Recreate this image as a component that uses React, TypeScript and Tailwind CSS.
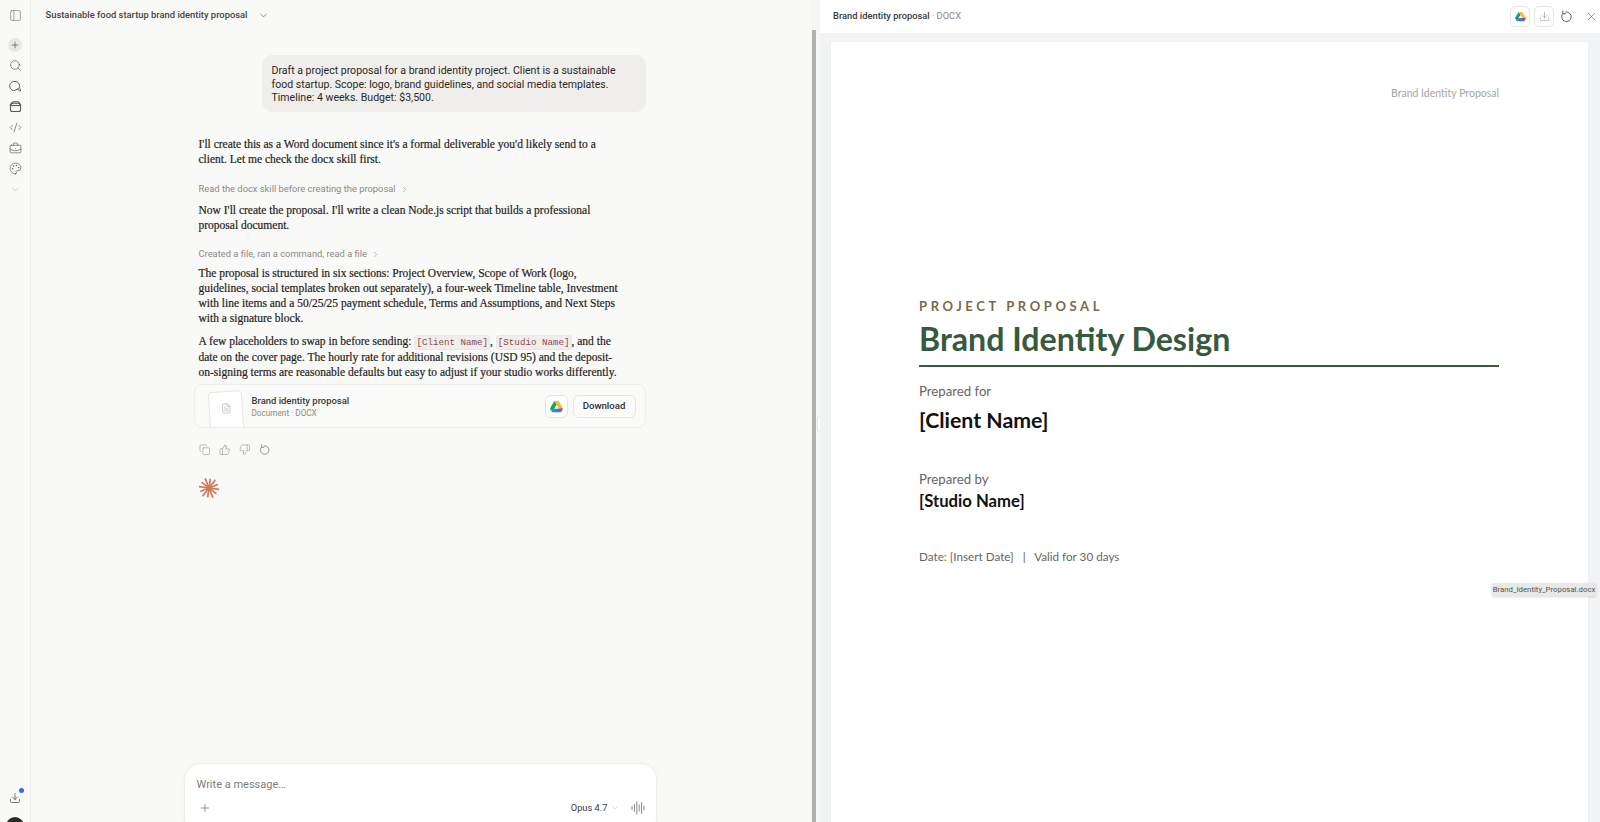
import React from "react";
import { PanelLeft, Plus, Search, Code2, BriefcaseBusiness, Palette, ChevronDown, ChevronRight, Download, Copy, ThumbsUp, ThumbsDown, X, FileText } from "lucide-react";

function Drive({ size = 14 }: { size?: number }) {
  return (
    <svg width={size} height={size} viewBox="0 0 24 22">
      <path d="M8 1h8l8 13.5h-8z" fill="#f6bf26" />
      <path d="M8 1l-8 13.5 4 7 8-14z" fill="#16a35f" />
      <path d="M4 21.5h16l4-7H8z" fill="#3b78e7" />
      <path d="M20 21.5l4-7h-6z" fill="#e2463a" />
      <path d="M12 8.5l3.4 6H8.6z" fill="#ffffff" />
    </svg>
  );
}

function Spark() {
  const rays = [8, 38, 68, 98, 128, 158, 188, 218, 248, 278, 308, 338];
  return (
    <svg width="20" height="20" viewBox="0 0 20 20">
      {rays.map((a, i) => (
        <line key={a} x1="10" y1="10" x2={10 + (i % 2 ? 8.8 : 9.8) * Math.cos((a * Math.PI) / 180)} y2={10 + (i % 2 ? 8.8 : 9.8) * Math.sin((a * Math.PI) / 180)} stroke="#d0785a" strokeWidth="1.7" strokeLinecap="round" />
      ))}
    </svg>
  );
}

function Wave() {
  const hs = [3, 7, 12, 6, 11, 4];
  return (
    <svg width="14" height="14" viewBox="0 0 14 14">
      {hs.map((h, i) => (
        <line key={i} x1={1 + i * 2.4} x2={1 + i * 2.4} y1={7 - h / 2} y2={7 + h / 2} stroke="#6b6a66" strokeWidth="0.8" strokeLinecap="round" />
      ))}
    </svg>
  );
}

function Redo({ size = 12, sw = 1.1 }: { size?: number; sw?: number }) {
  return (
    <svg width={size} height={size} viewBox="0 0 14 14" fill="none" stroke="currentColor" strokeWidth={sw} strokeLinecap="round" strokeLinejoin="round">
      <path d="M6.2 2.1A5.2 5.2 0 1 1 2.9 3.9" />
      <path d="M3 1v3h3" />
    </svg>
  );
}

function ChatsIcon() {
  return (
    <svg width="13" height="13" viewBox="0 0 14 14" fill="none" stroke="currentColor" strokeWidth="1" strokeLinecap="round" strokeLinejoin="round">
      <path d="M6.5 1.5a5 5 0 0 1 3.9 8.1L5 11.4A5 5 0 0 1 6.5 1.5z" />
      <path d="M9.4 9.8c.4 1 1.4 1.9 3.1 2l-.6-2.2" />
    </svg>
  );
}

function ProjectsIcon() {
  return (
    <svg width="13" height="13" viewBox="0 0 14 14" fill="none" stroke="currentColor" strokeWidth="1.1" strokeLinejoin="round">
      <rect x="1.5" y="3.5" width="11" height="9" rx="2.4" />
      <path d="M2.3 5.5c0-2.4 1.2-3.7 3-3.7h3.4c1.8 0 3 1.3 3 3.7" />
      <path d="M1.5 6h11" />
    </svg>
  );
}

function Code({ children }: { children: React.ReactNode }) {
  return <code className="font-['Liberation_Mono'] text-[9.2px] text-[#8c4a4a] bg-[#f0eeea] rounded-[3px] px-[1px] py-[1px] border border-[#eae8e3] [-webkit-text-stroke:0px]">{children}</code>;
}

function Tool({ children }: { children: React.ReactNode }) {
  return (
    <div className="flex items-center gap-[4px] h-[14px] font-['Roboto'] text-[9.35px] text-[#8b8a86]">
      {children}
      <ChevronRight size={9} strokeWidth={1.5} />
    </div>
  );
}

function Para({ className = "", children }: { className?: string; children: React.ReactNode }) {
  return <p className={`font-['Liberation_Serif'] text-[11.5px] leading-[15px] text-[#1f1e1c] px-[4px] whitespace-nowrap [-webkit-text-stroke:0.2px] ${className}`}>{children}</p>;
}

export default function App() {
  const sideIcon = "flex items-center justify-center h-[20.6px] text-[#55534f]";
  return (
    <div className="flex h-[822px] w-[1600px] overflow-hidden bg-[#f9f9f7]">
      <aside className="flex flex-col items-center w-[31px] shrink-0 border-r border-[#eeeeea] pt-[6px]">
        <div className="flex items-center justify-center h-[18px] text-[#6b6a66]"><PanelLeft size={13} strokeWidth={1.1} /></div>
        <div className="flex items-center justify-center w-[14px] h-[14px] mt-[14px] rounded-full bg-[#e9e8e4] text-[#444]"><Plus size={10} strokeWidth={1.5} /></div>
        <div className="flex flex-col w-full mt-[3.5px]">
          <div className={sideIcon}><Search size={13} strokeWidth={1.2} /></div>
          <div className={sideIcon}><ChatsIcon /></div>
          <div className={sideIcon}><ProjectsIcon /></div>
          <div className={sideIcon}><Code2 size={13} strokeWidth={1.2} /></div>
          <div className={sideIcon}><BriefcaseBusiness size={13} strokeWidth={1.2} /></div>
          <div className={sideIcon}><Palette size={13} strokeWidth={1.2} /></div>
          <div className="flex items-center justify-center h-[20.6px] text-[#a9a8a4]"><ChevronDown size={11} strokeWidth={1.3} /></div>
        </div>
        <div className="relative mt-auto text-[#44423f] flex items-center justify-center h-[14px]">
          <Download size={12} strokeWidth={1.4} />
          <span className="absolute right-[-3px] top-[-3px] w-[5px] h-[5px] rounded-full bg-[#3f67d8]" />
        </div>
        <div className="w-[18px] h-[18px] rounded-full bg-[#2a2a28] mt-[12px] mb-[-13px] shrink-0" />
      </aside>

      <main className="flex flex-col items-center w-[778px] shrink-0 h-[822px]">
        <header className="flex items-center self-start h-[30px] shrink-0 pl-[14.5px] gap-[10px] font-['Roboto'] text-[9.4px] font-medium text-[#45443f]">
          <span>Sustainable food startup brand identity proposal</span>
          <ChevronDown size={11} strokeWidth={1.4} className="text-[#55534f]" />
        </header>
        <div className="flex-1 min-h-0 w-[451px] flex flex-col">
          <div className="self-end w-[384px] mt-[25px] rounded-[10px] bg-[#f0eeea] px-[10px] pt-[9px] pb-[7px] font-['Roboto'] text-[10.55px] leading-[13.7px] text-[#2a2927] whitespace-nowrap">
            Draft a project proposal for a brand identity project. Client is a sustainable<br />food startup. Scope: logo, brand guidelines, and social media templates.<br />Timeline: 4 weeks. Budget: $3,500.
          </div>
          <Para className="mt-[25px]">I'll create this as a Word document since it's a formal deliverable you'd likely send to a<br />client. Let me check the docx skill first.</Para>
          <div className="mt-[15px] px-[4px]"><Tool>Read the docx skill before creating the proposal</Tool></div>
          <Para className="mt-[7px]">Now I'll create the proposal. I'll write a clean Node.js script that builds a professional<br />proposal document.</Para>
          <div className="mt-[14px] px-[4px]"><Tool>Created a file, ran a command, read a file</Tool></div>
          <Para className="mt-[5px]">The proposal is structured in six sections: Project Overview, Scope of Work (logo,<br />guidelines, social templates broken out separately), a four-week Timeline table, Investment<br />with line items and a 50/25/25 payment schedule, Terms and Assumptions, and Next Steps<br />with a signature block.</Para>
          <Para className="mt-[8px]">A few placeholders to swap in before sending: <Code>[Client Name]</Code>, <Code>[Studio Name]</Code>, and the<br />date on the cover page. The hourly rate for additional revisions (USD 95) and the deposit-<br />on-signing terms are reasonable defaults but easy to adjust if your studio works differently.</Para>
          <div className="flex items-center h-[44px] mt-[4px] -ml-[1px] rounded-[8px] border border-[#efeeea] bg-[#fafaf8] overflow-hidden shrink-0">
            <div className="flex items-center justify-center w-[34px] h-[42px] ml-[14px] mt-[12px] -rotate-[4deg] bg-white border border-[#e8e7e3] rounded-[4px] text-[#a6a5a1] shrink-0">
              <FileText size={11} strokeWidth={1.2} className="mb-[8px]" />
            </div>
            <div className="ml-[9px] flex flex-col">
              <span className="font-['Roboto'] text-[9.45px] font-medium leading-[13px] text-[#3b3a36]">Brand identity proposal</span>
              <span className="font-['Roboto'] text-[8.2px] leading-[11px] text-[#8b8a86] mt-[1px]">Document · DOCX</span>
            </div>
            <div className="ml-auto flex items-center justify-center w-[23px] h-[23px] rounded-[6px] border border-[#e6e5e1] bg-white"><Drive size={13} /></div>
            <div className="ml-[5px] mr-[9px] flex items-center justify-center w-[63px] h-[23px] rounded-[6px] border border-[#e6e5e1] bg-[#fbfbf9] font-['Roboto'] text-[9.6px] font-medium text-[#2f2e2b]">Download</div>
          </div>
          <div className="flex items-center gap-[8.5px] mt-[16px] px-[4px] text-[#8b8a86]">
            <Copy size={11.5} strokeWidth={1.1} />
            <ThumbsUp size={11.5} strokeWidth={1.1} />
            <ThumbsDown size={11.5} strokeWidth={1.1} />
            <Redo size={11.5} sw={1.1} />
          </div>
          <div className="mt-[22px] pl-[4px]"><Spark /></div>
        </div>
        <div className="shrink-0 w-[473px] h-[72px] mb-[-13px] rounded-[16px] bg-white border border-[#eeede9] px-[12px] pt-[14px] shadow-[0_1px_6px_rgba(0,0,0,0.03)]">
          <div className="font-['Roboto'] text-[11px] leading-[14px] text-[#7d7c78]">Write a message…</div>
          <div className="flex items-center mt-[8px] h-[16px] text-[#55534f]">
            <Plus size={12} strokeWidth={1.2} className="ml-[2px]" />
            <span className="ml-auto font-['Roboto'] text-[9.3px] text-[#3d3c39]">Opus 4.7</span>
            <ChevronDown size={8} strokeWidth={1.2} className="ml-[3px] text-[#a9a8a4]" />
            <span className="ml-[12px] mr-[-1px]"><Wave /></span>
          </div>
        </div>
      </main>

      <div className="relative w-[11px] shrink-0 flex justify-start bg-[#f6f6f4]">
        <div className="w-[4px] ml-[3px] mt-[30px] bg-[#b0b0ae]" />
        <div className="absolute left-[8px] top-[417px] w-[5px] h-[14px] rounded-[2px] bg-white border border-[#e4e4e0]" />
      </div>

      <section className="flex-1 min-w-0 flex flex-col bg-white">
        <header className="flex items-center h-[33px] shrink-0 pl-[13px] pr-[2px] font-['Roboto'] text-[9.35px]">
          <span className="font-medium text-[#3b3a36]">Brand identity proposal</span>
          <span className="text-[#8b8a86] ml-[2px]">· DOCX</span>
          <div className="ml-auto flex items-center justify-center w-[20px] h-[21px] rounded-[5px] border border-[#e6e5e1]"><Drive size={11} /></div>
          <div className="ml-[4px] flex items-center justify-center w-[20px] h-[21px] rounded-[5px] border border-[#e6e5e1] text-[#8b8a86]"><Download size={11} strokeWidth={1.2} /></div>
          <div className="ml-[5px] w-[14px] flex justify-center text-[#55534f]"><Redo size={13} sw={1} /></div>
          <div className="ml-[11px] w-[14px] flex justify-center text-[#55534f]"><X size={13} strokeWidth={1.1} /></div>
        </header>
        <div className="relative flex-1 min-h-0 bg-[#f1f3f5] pl-[11px] pr-[12px] pt-[9px]">
          <article className="h-[900px] bg-white pl-[88px] pr-[89px] pt-[44px] font-['Lato'] shadow-[0_0_1px_rgba(0,0,0,0.08)]">
            <div className="text-right text-[10.5px] leading-[14px] text-[#a5a5a5]">Brand Identity Proposal</div>
            <div className="mt-[198px] text-[13px] leading-[16px] font-bold tracking-[3.6px] text-[#7a6a48]">PROJECT PROPOSAL</div>
            <div className="mt-[3px] text-[32.2px] leading-[44px] font-bold text-[#375a3f]">Brand Identity Design</div>
            <div className="mt-[4px] border-b-[2px] border-[#375a3f]" />
            <div className="mt-[16px] text-[13.2px] leading-[16px] text-[#666]">Prepared for</div>
            <div className="mt-[8px] text-[21.3px] leading-[26px] font-bold text-[#111]">[Client Name]</div>
            <div className="mt-[38px] text-[13.2px] leading-[16px] text-[#666]">Prepared by</div>
            <div className="mt-[3px] text-[16.7px] leading-[22px] font-bold text-[#111]">[Studio Name]</div>
            <div className="mt-[36px] text-[11.7px] leading-[16px] text-[#666]">Date: [Insert Date]&nbsp;&nbsp; | &nbsp;&nbsp;Valid for 30 days</div>
          </article>
          <div className="absolute left-[672px] top-[550px] w-[104px] h-[13px] flex items-center justify-center rounded-[2px] bg-[#e8e8e6] font-['Roboto'] text-[7.8px] text-[#555] shadow-[0_1px_3px_rgba(0,0,0,0.15)]">Brand_Identity_Proposal.docx</div>
        </div>
      </section>
    </div>
  );
}
